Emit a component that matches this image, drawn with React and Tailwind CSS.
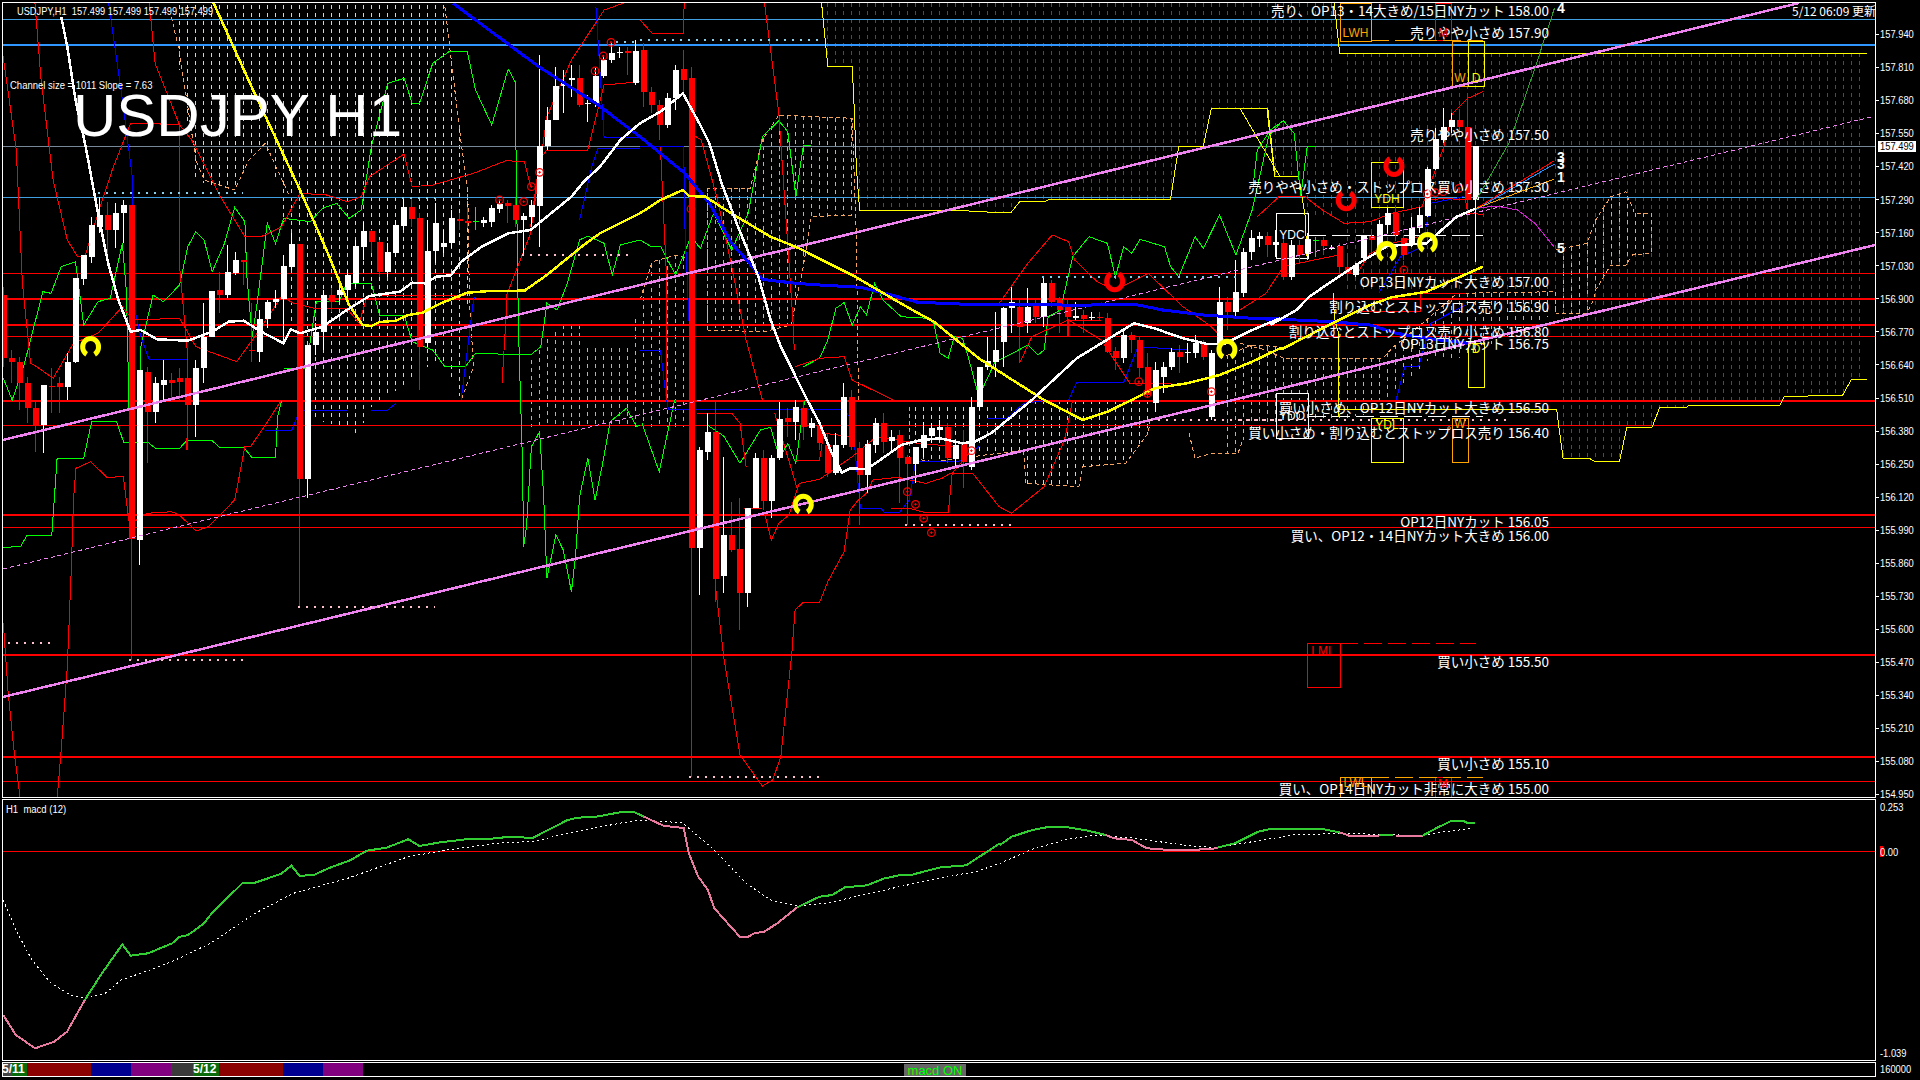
import React from "react";

// read off the reference in zoomed coordinates, converted to page pixels here
const seg = (xo, s, yo) => (...a) => {
  const out = [];
  for (let i = 0; i < a.length; i += 2) out.push([xo + a[i] / s, yo + a[i + 1] / 3]);
  return out;
};
const A = seg(0, 2.45, 0);
const B = seg(640, 2.45, 0);
const C = seg(1240, 2.306, 0);
const D = seg(640, 2.45, 400);
const E = seg(0, 2.45, 400);
const F = seg(1240, 2.306, 400);
const M1 = seg(0, 1.568, 780);
const M2 = seg(1000, 1.704, 780);
const str = (p) => p.map((q) => `${q[0].toFixed(1)},${q[1].toFixed(1)}`).join(" ");

// type, body top, body bottom, wick top, wick bottom (y x 3); one per bar, 8px apart
const BARS = `r 885 1075 860 1100|r 1075 1085 1050 1150|r 1085 1150 1070 1230|r 1150 1225 1130 1270|r 1225 1275 1200 1355|w 1155 1275 1155 1358|r 1157 1160 1105 1240|r 1150 1160 1130 1240|w 1085 1160 1060 1200|w 835 1085 835 1090|w 765 838 765 855|w 675 770 650 790|w 645 680 590 700|r 645 690 605 790|w 640 690 610 745|w 615 640 600 730|r 615 1618 615 1980|w 1110 1620 1110 1695|r 1115 1235 1100 1390|w 1150 1235 1130 1270|w 1140 1155 1080 1200|r 1140 1150 1120 1200|r 1135 1145 1105 1200|r 1135 1215 1100 1350|w 1105 1215 1080 1310|w 1010 1105 910 1150|w 873 1010 873 1010|r 870 885 815 940|w 815 885 735 895|w 780 820 755 825|r 780 785 780 855|r 1050 1054 910 1085|w 958 1055 930 1085|w 905 958 900 985|w 897 905 870 925|w 798 897 765 1030|w 733 800 700 810|r 733 1436 733 1820|w 1035 1436 1035 1493|w 995 1035 970 1065|w 885 995 870 1050|r 885 905 865 935|w 870 885 855 905|w 825 870 810 900|w 738 850 720 860|w 693 740 665 780|r 693 725 690 760|r 725 815 720 830|w 755 815 730 830|w 675 760 660 770|w 620 678 595 690|r 620 657 595 680|r 655 1040 640 1170|w 752 1030 660 1040|w 670 752 610 790|w 728 740 690 760|w 654 728 630 745|r 658 664 640 690|r 664 668 620 685|g 664 667 620 690|w 660 668 650 680|w 623 665 615 680|w 612 628 600 640|r 610 618 600 670|r 615 660 595 680|w 648 660 640 765|w 615 650 600 680|w 438 618 165 740|w 360 438 320 450|w 258 360 200 360|w 250 258 210 340|w 235 240 195 290|r 235 315 195 320|w 310 312 285 365|w 228 310 205 320|w 180 228 165 235|w 160 180 130 190|w 157 160 140 175|r 153 158 140 225|w 153 250 120 255|r 150 275 130 320|r 275 315 260 340|r 315 375 300 420|w 295 375 280 385|w 210 295 195 330|r 208 240 150 280|r 235 1643 200 2330|w 1350 1643 1340 1785|w 1295 1355 1240 1380|r 1295 1737 1200 1805|w 1605 1728 1370 1778|r 1605 1650 1505 1655|r 1647 1778 1495 1890|w 1525 1780 1525 1820|w 1375 1525 1360 1525|r 1375 1503 1350 1530|w 1375 1503 1365 1555|w 1257 1375 1205 1380|r 1255 1265 1225 1310|w 1220 1265 1200 1320|r 1225 1280 1200 1320|w 1268 1283 1255 1310|r 1275 1330 1260 1350|r 1335 1420 1300 1430|w 1335 1418 1300 1425|w 1190 1335 1150 1345|r 1190 1340 1170 1350|r 1343 1425 1325 1575|w 1333 1425 1320 1480|w 1270 1335 1255 1360|r 1270 1325 1240 1360|w 1310 1322 1290 1355|r 1305 1375 1290 1510|r 1370 1392 1365 1575|w 1340 1392 1340 1450|w 1305 1345 1265 1370|w 1285 1308 1270 1330|w 1280 1290 1260 1320|r 1280 1375 1270 1390|w 1335 1378 1320 1400|r 1330 1385 1290 1465|w 1220 1400 1190 1410|w 1100 1220 1100 1230|w 1083 1100 1010 1110|w 1050 1085 935 1130|w 925 1025 920 1100|w 905 925 860 1000|r 920 980 900 1090|w 920 970 865 1000|r 915 950 900 970|w 850 950 830 980|r 850 905 840 920|r 900 930 890 1000|r 915 950 900 1010|w 948 955 905 960|r 945 958 930 1000|w 950 953 935 960|r 950 953 935 960|r 955 1055 940 1060|r 1052 1075 1040 1110|w 1005 1075 990 1090|r 1005 1020 995 1060|r 1020 1105 1010 1130|r 1100 1185 1060 1195|w 1110 1210 1085 1235|w 1100 1130 1085 1180|w 1055 1100 1045 1110|r 1055 1070 1035 1120|w 1055 1060 1030 1090|w 1030 1060 1005 1075|r 1030 1070 1020 1080|w 1060 1250 1050 1260|w 905 1035 860 1060|r 905 935 890 990|w 875 935 780 950|w 755 880 745 890|w 715 755 690 780|w 708 718 695 740|r 708 735 695 770|w 725 735 690 770|r 730 830 715 840|w 735 830 720 840|r 735 765 720 790|w 718 762 700 770|g 720 722 710 770|r 720 738 710 765|w 743 747 735 750|r 738 800 730 830|r 800 822 760 830|w 795 825 790 830|w 708 775 705 780|r 708 720 690 760|w 672 745 660 760|w 640 675 625 700|r 640 705 620 720|r 715 765 705 780|w 685 730 650 740|w 645 685 620 700|w 508 648 500 650|w 418 508 385 510|w 380 420 325 430|w 360 382 340 400|r 360 382 340 400|r 382 600 285 660|w 438 600 438 785`
  .split("|")
  .map((s, i) => {
    const [t, a, b, c, d] = s.split(" ");
    return { x: 1 + 8 * i, t, top: a / 3, bot: b / 3, wt: c / 3, wb: d / 3 };
  });

const at = (p, x) => {
  if (x <= p[0][0]) return p[0][1];
  for (let i = 1; i < p.length; i++) {
    if (x <= p[i][0]) {
      const [x0, y0] = p[i - 1];
      const [x1, y1] = p[i];
      return y0 + ((y1 - y0) * (x - x0)) / (x1 - x0 || 1);
    }
  }
  return p[p.length - 1][1];
};

// ichimoku hatch: one dashed column per bar between the two spans
const hatch = (up, low, color) => {
  const out = [];
  const x0 = Math.max(up[0][0], low[0][0]);
  const x1 = Math.min(up[up.length - 1][0], low[low.length - 1][0]);
  for (let i = 0; i < 240; i++) {
    const x = 3.5 + 8 * i;
    if (x >= x0 && x <= x1) out.push({ x, y1: at(up, x), y2: at(low, x), color });
  }
  return out;
};

const redBottom = [
  ...B(445, 10, 460, 198, 520, 198, 525, 330, 530, 500, 538, 630, 760, 630, 850, 636, 910, 636, 930, 605, 990, 605, 1005, 597, 1300, 597, 1320, 438, 1380, 438, 1400, 325, 1538, 325, 1556, 530, 1568, 530),
  ...C(0, 325, 62, 325, 80, 530, 135, 530, 150, 645, 229, 645),
];
const redRight = [
  ...C(230, 880, 728, 880, 729, 1228, 745, 1375, 805, 1375, 820, 1385, 875, 1385, 892, 1282, 950, 1282, 968, 1222, 1030, 1222, 1035, 1215, 1245, 1215, 1255, 1190, 1390, 1185, 1410, 1138, 1445, 1138),
];
const HATCH = [
  ...hatch(A(430, 15, 1090, 15, 1130, 430, 1146, 570), A(430, 130, 480, 545, 575, 570, 610, 480, 650, 430, 690, 600, 720, 1050, 750, 1250, 860, 1290, 880, 1310, 900, 1230, 950, 1190, 1050, 1100, 1090, 1090, 1130, 1200, 1146, 900), "#e0d0d0"),
  ...hatch(A(1290, 1100, 1340, 1020, 1380, 975, 1420, 975, 1440, 1045, 1540, 1045, 1568, 900).concat(B(30, 785, 90, 765, 115, 775)), A(1290, 1280, 1568, 1280).concat(B(115, 1280)), "#f4a460"),
  ...hatch(B(165, 565, 270, 565, 300, 420, 340, 345, 430, 350, 520, 355), B(165, 990, 305, 995, 370, 975, 400, 800, 420, 650, 520, 645), "#f4a460"),
  ...hatch(B(445, 10, 1568, 10).concat(C(229, 10)), redBottom, "#ff0000"),
  ...hatch(C(230, 160, 1445, 160), redRight, "#ff0000"),
  ...hatch(D(940, 0, 1250, 0), D(940, 250, 1075, 260, 1085, 200, 1190, 190, 1245, 100, 1250, 60), "#e0d0d0"),
  ...hatch(D(660, 20, 940, 20), D(660, 175, 720, 185, 940, 150), "#e0d0d0"),
  ...hatch(B(1420, 1075, 1500, 1035, 1568, 1040).concat(C(100, 1075, 330, 1075, 350, 1045, 430, 960, 500, 880, 728, 875)), D(1345, 100, 1360, 175, 1400, 160, 1465, 160, 1480, 110, 1568, 60).concat(C(0, 1330, 20, 1260, 220, 1260, 300, 1240, 440, 1075, 510, 1075, 728, 940)), "#f4a460"),
  ...hatch(C(728, 750, 800, 730, 820, 660, 855, 590, 890, 575, 910, 640, 948, 640), C(728, 940, 800, 940, 815, 900, 820, 870, 855, 795, 890, 795, 905, 765, 948, 760), "#f4a460"),
];

const KUMO_EDGE = [
  A(420, 50, 440, 160, 480, 480, 500, 540, 575, 570, 610, 480, 650, 430, 710, 590),
  A(1090, 20, 1130, 430, 1146, 570, 1150, 900, 1160, 1100, 1130, 1200),
  B(0, 900, 30, 785, 90, 765, 115, 775),
  B(165, 990, 165, 565, 270, 565, 300, 420, 340, 345, 430, 350, 520, 355, 530, 700, 535, 1200),
  B(165, 990, 305, 995, 370, 975, 400, 800, 420, 650, 520, 645),
  D(660, 20, 660, 175, 720, 185, 940, 150, 945, 250, 1075, 260, 1085, 200, 1190, 190, 1245, 100, 1250, 60),
  D(1345, 100, 1360, 175, 1400, 160, 1465, 160, 1480, 110),
  B(1420, 1075, 1500, 1035, 1568, 1040),
  C(0, 1030, 60, 1050, 100, 1075, 330, 1075, 350, 1045, 430, 960, 500, 880, 728, 875, 728, 940),
  C(728, 750, 800, 730, 820, 660, 855, 590, 890, 575, 910, 640, 948, 640, 948, 760, 905, 765, 890, 795, 855, 795, 820, 870, 815, 900, 800, 940, 728, 940),
];

const WHITE_MA = [
  ...A(150, 50, 165, 140, 185, 300, 210, 440, 240, 640, 265, 790, 290, 900, 320, 995, 345, 990, 385, 1018, 460, 1022, 520, 995, 560, 965, 597, 962, 640, 995, 695, 1030, 712, 988, 735, 1000, 790, 980, 850, 930, 905, 888, 980, 875, 1010, 848, 1040, 850, 1070, 830, 1105, 826, 1130, 785, 1180, 740, 1245, 700, 1300, 690, 1350, 640, 1400, 590, 1430, 545, 1470, 500, 1520, 420, 1568, 370),
  ...B(50, 335, 105, 280, 150, 380, 170, 430, 200, 550, 240, 680, 290, 830, 320, 960, 345, 1040, 410, 1200),
  ...D(440, 70, 470, 160, 495, 218, 515, 205, 555, 208, 600, 170, 640, 135, 690, 120, 735, 115, 790, 130, 820, 125, 860, 100, 920, 40, 960, 0),
  ...B(1070, 1075, 1150, 1015, 1210, 970, 1260, 985, 1330, 1015, 1390, 1032, 1430, 1032, 1500, 990, 1568, 955),
  ...C(70, 975, 130, 930, 160, 890, 210, 845, 280, 785, 340, 738, 430, 730, 500, 650, 545, 625),
];
const YELLOW_MA = [
  ...A(520, 0, 620, 270, 735, 570, 800, 750, 855, 915, 888, 975, 910, 978, 930, 966, 970, 962, 1000, 945, 1035, 938, 1080, 910, 1145, 878, 1200, 873, 1285, 872, 1340, 825, 1430, 735, 1470, 700, 1568, 640),
  ...B(50, 600, 105, 570, 120, 588, 160, 590, 230, 645, 320, 710, 390, 745, 430, 770, 520, 825, 590, 875, 660, 925, 720, 965, 770, 1015, 830, 1075, 900, 1130, 990, 1200),
  ...D(1085, 60, 1145, 35, 1205, 0),
  ...B(1260, 1165, 1340, 1150, 1420, 1125, 1500, 1085, 1568, 1045),
  ...C(100, 1045, 220, 965, 300, 915, 350, 892, 430, 875, 500, 835, 560, 800),
];
const BLUE_MA = [
  ...A(1110, 10, 1320, 200, 1460, 310, 1568, 410),
  ...B(110, 520, 170, 610, 225, 730, 265, 785, 300, 838, 380, 850, 440, 855, 540, 862, 600, 880, 680, 907, 800, 913, 1000, 913, 1080, 918, 1130, 912, 1220, 915, 1280, 930, 1380, 945, 1500, 955, 1568, 957),
  ...C(60, 958, 130, 960, 210, 965, 300, 975, 360, 1000, 430, 1015, 525, 1030),
];

const BLUE_THIN = [
  A(265, 0, 300, 300, 325, 540, 325, 900, 345, 1010, 365, 1078, 460, 1078),
  A(1460, 20, 1480, 412, 1565, 412),
  A(1420, 660, 1450, 500, 1465, 445, 1568, 445),
  B(0, 440, 107, 440, 110, 680, 125, 1100, 125, 1200),
  B(0, 1050, 50, 1050, 65, 1200),
  A(1130, 1200, 1160, 900, 1165, 890),
  E(650, 90, 715, 90, 735, 30, 850, 30),
  E(910, 30, 950, 30, 970, 10),
  D(65, 0, 70, 28, 500, 30, 520, 60, 540, 325, 590, 325, 600, 338, 635, 338, 660, 300, 675, 185, 780, 185, 830, 140),
  D(850, 55, 900, 55, 940, 10, 1000, 0),
  B(1050, 1200, 1070, 1147, 1185, 1147, 1220, 1040, 1340, 1050),
  C(360, 1200, 380, 1100, 412, 1100, 440, 970, 520, 915),
  C(320, 880, 370, 770, 420, 740, 440, 610, 515, 590),
];

const RED_THIN = [
  A(85, 0, 100, 230, 130, 540, 165, 720, 190, 770, 208, 770, 240, 640, 275, 510, 320, 370, 360, 370, 440, 375, 470, 420, 540, 590, 600, 710, 640, 710, 690, 680, 735, 580, 800, 585, 850, 605, 885, 590, 905, 530, 990, 462, 1010, 560, 1060, 555, 1160, 520, 1240, 482, 1285, 485, 1300, 560),
  A(1300, 680, 1322, 480, 1340, 450, 1440, 450, 1480, 255, 1568, 245),
  A(7, 165, 40, 450, 55, 850, 75, 1090, 90, 1100, 130, 1135, 180, 1030, 240, 1000, 300, 920, 325, 960, 440, 955, 480, 1040, 580, 1085, 630, 1000, 690, 890, 720, 910, 770, 925, 850, 925, 880, 970, 900, 885, 1140, 885),
  E(8, 670, 20, 880, 35, 1060, 50, 1200),
  E(140, 1195, 150, 1050, 165, 800, 175, 500, 180, 300, 186, 205, 222, 185, 262, 232, 302, 230, 322, 420),
  E(322, 370, 360, 340, 420, 335, 440, 345, 480, 393, 510, 380, 575, 300, 600, 140, 615, 138, 650, 75, 690, 0),
  A(365, 0, 380, 190, 440, 375, 440, 800, 460, 1070, 458, 1350),
  A(1550, 0, 1480, 30, 1400, 180, 1340, 350, 1320, 520, 1300, 700, 1240, 890, 1240, 950, 1230, 1150),
  B(0, 60, 30, 100, 107, 100, 108, 10),
  B(305, 10, 340, 340, 375, 970, 378, 1050),
  B(50, 440, 65, 830, 65, 1200),
  B(125, 400, 150, 420, 190, 600, 225, 800, 260, 1020, 300, 1200),
  B(380, 1100, 440, 1075, 500, 1070, 520, 1140, 620, 1200),
  D(185, 560, 205, 770, 245, 1065, 300, 1158, 325, 1140, 345, 1070, 372, 760, 380, 630, 400, 607, 440, 607, 460, 545, 500, 455, 515, 330, 535, 300, 555, 280, 570, 240, 630, 232, 700, 250, 740, 235, 760, 220, 815, 220, 880, 320, 910, 340, 990, 260, 1040, 120, 1060, 0),
  D(305, 340, 322, 420, 340, 370, 365, 345, 390, 250, 440, 238, 520, 170, 580, 110, 680, 130, 780, 140),
  D(330, 40, 385, 265),
  D(615, 325, 660, 325, 700, 338, 755, 338, 765, 220, 820, 140),
  D(255, 325, 300, 325),
  D(140, 40, 225, 40, 245, 70, 260, 200),
  D(380, 180, 440, 180, 450, 100, 520, 110),
  B(880, 910, 950, 790, 1010, 705, 1050, 725, 1065, 780, 1120, 845, 1165, 870, 1245, 820, 1330, 920, 1400, 980, 1440, 1030),
  B(930, 1090, 960, 1010, 1050, 960, 1130, 1020, 1200, 1150, 1300, 1150),
  B(1050, 1010, 1050, 960, 1130, 960),
  C(40, 650, 90, 590, 150, 590, 190, 630, 240, 670, 300, 665, 350, 640, 420, 620, 470, 440, 490, 340, 525, 295, 560, 275),
  C(0, 930, 60, 880, 100, 800, 170, 780, 230, 765, 230, 820, 270, 820, 300, 760, 350, 730, 410, 710),
  C(280, 935, 415, 935, 415, 880, 520, 880),
  C(440, 600, 470, 595, 520, 600, 525, 640, 560, 643),
];

const GREEN_THIN = [
  A(8, 1135, 30, 1200, 60, 1090, 105, 875, 125, 880, 150, 800, 185, 785, 205, 975, 240, 905, 270, 895, 300, 730, 310, 880, 320, 1440),
  A(342, 1200, 345, 1040, 375, 885, 400, 905, 440, 855, 460, 740, 480, 695, 500, 720, 520, 815, 550, 730, 575, 622, 600, 665, 605, 830, 618, 1010, 630, 910, 655, 670, 675, 730, 695, 655, 760, 665, 790, 625, 825, 610, 855, 655, 885, 630, 910, 440, 950, 250, 990, 235, 1010, 310, 1028, 310, 1060, 190, 1100, 155, 1145, 155, 1165, 270, 1205, 375, 1245, 207, 1262, 245, 1270, 980, 1280, 1380, 1283, 1640, 1290, 1580, 1302, 1340, 1322, 1295, 1332, 1490, 1340, 1735, 1362, 1605, 1380, 1650, 1400, 1775, 1410, 1670, 1420, 1490, 1440, 1375, 1458, 1500, 1475, 1400, 1495, 1265, 1535, 1225, 1560, 1280, 1568, 1275),
  E(7, 442, 50, 440, 67, 405, 127, 405, 140, 175, 205, 175, 225, 63, 285, 63, 303, 127, 362, 127, 381, 145, 440, 145, 459, 120, 518, 120, 538, 142, 597, 142, 617, 172, 675, 172, 680, 50, 690, 0),
  A(695, 1105, 750, 1105, 775, 905, 830, 905, 850, 850, 910, 850, 930, 945, 990, 945, 1010, 1025, 1060, 1050, 1090, 1100, 1140, 1100, 1165, 1060, 1300, 1065, 1325, 1040, 1340, 910, 1365, 930, 1390, 850, 1420, 720, 1440, 708, 1480, 730, 1500, 825, 1520, 735, 1568, 720),
  B(0, 720, 25, 738, 50, 738, 87, 825, 125, 710, 148, 745, 180, 640, 225, 750, 265, 640, 300, 410, 340, 362, 362, 395, 382, 590, 400, 437, 420, 437),
  B(400, 1100, 440, 1075, 460, 1020, 480, 925, 500, 908, 520, 975, 540, 920, 555, 945, 575, 850, 595, 900, 640, 950, 705, 955, 720, 970, 735, 1060, 755, 1075, 770, 1010, 790, 1015, 805, 1075, 830, 1190, 870, 1085, 905, 1065, 950, 1035, 975, 1065, 990, 1050, 1000, 950, 1030, 930, 1060, 770, 1100, 710, 1145, 730, 1165, 830, 1185, 740, 1205, 760, 1225, 718, 1285, 740, 1300, 800, 1320, 830, 1360, 710, 1380, 745, 1420, 645, 1460, 765, 1500, 630, 1540, 410, 1568, 370),
  C(30, 560, 40, 450, 70, 390, 100, 362, 125, 400, 140, 590, 155, 440, 175, 438),
  D(5, 70, 47, 215, 85, 0),
  D(165, 75, 205, 108, 245, 190, 295, 90, 320, 82, 342, 175, 362, 130, 382, 190, 400, 25, 405, 0),
];

const YELLOW_STEP = [
  redBottom.slice(0, 23),
  C(0, 325, 62, 325, 80, 530, 135, 530, 150, 645, 155, 780),
  C(217, 5, 230, 160, 1445, 160),
  C(215, 880, 218, 960, 228, 1000, 228, 1250),
  F(229, 28, 730, 28, 745, 175, 805, 175, 820, 185, 875, 185, 892, 82, 950, 82, 968, 22, 1030, 22, 1035, 15, 1245, 15, 1255, -10, 1390, -15, 1410, -62, 1445, -62),
];

const HLINES = [
  [19, 1, "#3f9fe0"], [44, 2, "#2f97ff"], [146, 1, "#778899"], [197, 1, "#3f9fe0"],
  [273, 1, "#ff0000"], [298, 2, "#ff0000"], [324, 2, "#ff0000"], [336, 1, "#ff0000"],
  [400, 2, "#ff0000"], [425, 1, "#ff0000"], [514, 2, "#ff0000"], [527, 1, "#ff0000"],
  [654, 2, "#ff0000"], [756, 2, "#ff0000"], [781, 1, "#ff0000"],
];

// square dotted levels
const DOTS = [
  [A(240, 578, 595, 578), "#87ceeb"], [A(985, 595, 1065, 595), "#87ceeb"], [A(1510, 125, 1568, 125), "#87ceeb"],
  [B(0, 120, 440, 120), "#87ceeb"], [B(985, 830, 1470, 830), "#87ceeb"],
  [A(1280, 765, 1540, 765), "#ffc0cb"], [D(650, 375, 910, 375), "#ffc0cb"], [D(120, 1130, 440, 1130), "#ffc0cb"],
  [E(730, 620, 1065, 620), "#ffc0cb"], [E(317, 780, 595, 780), "#ffc0cb"], [E(20, 728, 125, 728), "#ffc0cb"],
  [F(0, 60, 615, 60), "#ffc0cb"], [D(1250, 60, 1568, 60), "#ffc0cb"],
];

const BOXES = [
  [1340, 3, 31, 38, "#ffa500"], [1435, 3, 16, 37, "#ff0000"], [1452, 41, 16, 45, "#ffa500"], [1468, 41, 16, 45, "#ffff00"],
  [1276, 213, 32, 45, "#ffffff"], [1371, 162, 32, 45, "#ffff00"], [1468, 343, 16, 44, "#ffff00"], [1276, 393, 32, 45, "#ffffff"],
  [1371, 418, 32, 44, "#ffff00"], [1452, 418, 16, 44, "#ffa500"], [1307, 643, 33, 44, "#ff0000"], [1340, 777, 31, 22, "#ffa500"], [1435, 777, 16, 22, "#ff0000"],
];
const LEVEL_DASH = [
  [1371, 1483, 40.5, "#ffa500"], [1308, 1483, 235.5, "#ffffff"], [1308, 1483, 416.5, "#ffffff"],
  [1340, 1476, 643.5, "#ff0000"], [1371, 1483, 777.5, "#ffa500"],
];

const TARGETS = [
  ...[[1224, 600], [1283, 605], [1302, 560], [1322, 517], [1458, 213], [1478, 168], [1497, 127]].map(([x, y]) => A(x, y)[0]),
  ...[[125, 627], [1222, 1145], [1243, 1180], [1400, 1175]].map(([x, y]) => B(x, y)[0]),
  ...[[655, 275], [675, 313], [695, 355], [714, 398], [812, 152]].map(([x, y]) => D(x, y)[0]),
  ...[[432, 582], [450, 578], [468, 575], [505, 565], [378, 810]].map(([x, y]) => C(x, y)[0]),
];
const HOOPS_Y = [A(222, 1042)[0], D(400, 315)[0], B(1438, 1050)[0], C(338, 757)[0], C(432, 730)[0]];
const HOOPS_R = [B(1163, 843)[0], C(245, 600)[0], C(355, 497)[0]];

const MACD_LINES = [
  [M1(5, 705, 25, 765, 55, 805, 85, 785, 105, 755, 133, 660), "#e87aa0"],
  [M1(133, 660, 158, 585, 192, 493, 205, 527, 232, 520, 270, 490, 282, 470, 295, 465, 320, 430, 332, 400, 380, 310, 400, 308, 440, 282, 457, 257, 470, 288, 493, 284, 515, 265, 550, 240, 575, 212, 606, 203, 640, 178, 658, 198, 690, 187, 735, 177, 770, 176, 800, 170, 835, 174, 890, 120, 905, 113, 935, 110, 975, 96, 995, 97, 1010, 110), "#32cd32"],
  [M1(1010, 110, 1040, 137, 1072, 144, 1080, 220, 1095, 290, 1110, 330, 1120, 385, 1160, 470, 1173, 470, 1185, 458, 1197, 457, 1220, 428, 1250, 382), "#e87aa0"],
  [M1(1250, 382, 1285, 350, 1305, 345, 1325, 322, 1360, 316, 1385, 296, 1410, 286, 1430, 284, 1475, 262, 1515, 256, 1568, 190), "#32cd32"],
  [M2(0, 195, 20, 170, 55, 150, 85, 140, 110, 140, 150, 152, 180, 165), "#32cd32"],
  [M2(180, 165, 195, 175, 225, 180, 250, 205, 290, 210, 360, 208, 370, 203), "#e87aa0"],
  [M2(370, 203, 400, 190, 440, 155, 460, 147, 550, 147, 580, 158), "#32cd32"],
  [M2(580, 158, 595, 167, 645, 167), "#e87aa0"],
  [M2(645, 165, 670, 165), "#32cd32"],
  [M2(675, 167, 720, 167), "#e87aa0"],
  [M2(720, 167, 745, 143, 770, 122, 790, 122, 795, 128, 810, 128), "#32cd32"],
];
const MACD_SIGNAL = [
  ...M1(5, 360, 25, 450, 50, 540, 80, 610, 110, 645, 135, 655, 165, 640, 190, 600, 235, 570, 275, 540, 330, 490, 400, 400, 460, 340, 545, 295, 640, 230, 700, 210, 780, 190, 840, 183, 900, 155, 1000, 120, 1070, 128, 1120, 210, 1170, 310, 1210, 362, 1250, 378, 1300, 368, 1410, 320, 1500, 285, 1530, 275, 1568, 250),
  ...M2(55, 208, 110, 180, 150, 168, 180, 167, 230, 175, 320, 197, 370, 203, 430, 185, 500, 165, 580, 160, 720, 167, 745, 158, 805, 145),
];

const NOTES = [
  ["売り、OP13・14大きめ/15日NYカット 158.00", "top-[0px]"],
  ["売りやや小さめ 157.90", "top-[22px]"],
  ["売りやや小さめ 157.50", "top-[124px]"],
  ["売りやや小さめ・ストップロス買い小さめ 157.30", "top-[176px]"],
  ["OP13日NYカット大きめ 157.00", "top-[271px]"],
  ["割り込むとストップロス売り 156.90", "top-[296px]"],
  ["割り込むとストップロス売り小さめ 156.80", "top-[321px]"],
  ["OP13日NYカット 156.75", "top-[333px]"],
  ["買い小さめ、OP12日NYカット大きめ 156.50", "top-[397px]"],
  ["買い小さめ・割り込むとストップロス売り 156.40", "top-[422px]"],
  ["OP12日NYカット 156.05", "top-[511px]"],
  ["買い、OP12・14日NYカット大きめ 156.00", "top-[525px]"],
  ["買い小さめ 155.50", "top-[651px]"],
  ["買い小さめ 155.10", "top-[753px]"],
  ["買い、OP14日NYカット非常に大きめ 155.00", "top-[778px]"],
];
const TAGS = [
  ["LWH", "left-[1337px] top-[23px] w-[31px] text-[#ffa500] text-[12px]"],
  ["M", "left-[1432px] top-[23px] w-[16px] text-[#ff0000] text-[12px]"],
  ["W", "left-[1449px] top-[68px] w-[16px] text-[#ffa500] text-[12px]"],
  ["D", "left-[1465px] top-[68px] w-[16px] text-[#ffff00] text-[12px]"],
  ["YDC", "left-[1273px] top-[225px] w-[32px] text-white text-[12px]"],
  ["YDH", "left-[1368px] top-[189px] w-[32px] text-[#ffff00] text-[12px]"],
  ["D", "left-[1465px] top-[339px] w-[16px] text-[#ffff00] text-[12px]"],
  ["YDO", "left-[1273px] top-[406px] w-[32px] text-white text-[12px]"],
  ["YDL", "left-[1368px] top-[415px] w-[32px] text-[#ffff00] text-[12px]"],
  ["W", "left-[1449px] top-[414px] w-[16px] text-[#ffa500] text-[12px]"],
  ["LML", "left-[1304px] top-[641px] w-[32px] text-[#ff0000] text-[12px]"],
  ["LWL", "left-[1337px] top-[773px] w-[31px] text-[#ffa500] text-[12px]"],
  ["M", "left-[1432px] top-[774px] w-[16px] text-[#ff0000] text-[12px]"],
  ["4", "left-[1554px] top-[-2px] w-[8px] text-white text-[14px] font-bold"],
  ["3", "left-[1554px] top-[147px] w-[8px] text-white text-[14px] font-bold"],
  ["3", "left-[1554px] top-[154px] w-[8px] text-white text-[14px] font-bold"],
  ["1", "left-[1554px] top-[167px] w-[8px] text-white text-[14px] font-bold"],
  ["5", "left-[1554px] top-[238px] w-[8px] text-white text-[14px] font-bold"],
];
const TICKS = ["157.940", "157.810", "157.680", "157.550", "157.420", "157.290", "157.160", "157.030", "156.900", "156.770", "156.640", "156.510", "156.380", "156.250", "156.120", "155.990", "155.860", "155.730", "155.600", "155.470", "155.340", "155.210", "155.080", "154.950"];
const STRIP = [
  ["bg-[#444444]", "w-[9px]"], ["bg-[#0a6b0a]", "w-[15px]"], ["bg-[#8b0000]", "w-[64px]"], ["bg-[#000090]", "w-[40px]"], ["bg-[#800080]", "w-[40px]"],
  ["bg-[#3a3a3a]", "w-[22px]"], ["bg-[#0a6b0a]", "w-[26px]"], ["bg-[#8b0000]", "w-[64px]"], ["bg-[#000090]", "w-[40px]"], ["bg-[#800080]", "w-[40px]"],
];

const Line = ({ p, c, w = 1, dash }) => (
  <polyline points={str(p)} fill="none" stroke={c} strokeWidth={w} strokeDasharray={dash} />
);

function PriceChart() {
  return (
    <svg width="1872" height="794" viewBox="3 3 1872 794" shapeRendering="crispEdges" className="block">
      {HATCH.map((h, i) => (
        <line key={i} x1={h.x} x2={h.x} y1={h.y1} y2={h.y2} stroke={h.color} strokeDasharray="4 4" />
      ))}
      {KUMO_EDGE.map((p, i) => <Line key={i} p={p} c="#f4a460" dash="4 3" />)}
      {HLINES.map(([y, w, c]) => <rect key={y} x="3" y={y} width="1872" height={w} fill={c} />)}
      {BOXES.map(([x, y, w, h, c], i) => (
        <rect key={i} x={x + 0.5} y={y + 0.5} width={w} height={h} fill="none" stroke={c} />
      ))}
      {LEVEL_DASH.map(([x1, x2, y, c], i) => (
        <line key={i} x1={x1} x2={x2} y1={y} y2={y} stroke={c} strokeDasharray="18 6" />
      ))}
      {YELLOW_STEP.map((p, i) => <Line key={i} p={p} c="#ffff00" />)}
      {GREEN_THIN.map((p, i) => <Line key={i} p={p} c="#00ff00" />)}
      {BLUE_THIN.map((p, i) => <Line key={i} p={p} c="#0000ff" />)}
      {RED_THIN.map((p, i) => <Line key={i} p={p} c="#ff0000" />)}
      {BARS.map((b, i) => {
        const c = b.t === "r" ? "#ff0000" : b.t === "g" ? "#00ff00" : "#ffffff";
        return (
          <g key={i} fill={c}>
            <rect x={b.x + 2} y={b.wt} width="1" height={b.wb - b.wt} />
            <rect x={b.x} y={b.top} width="6" height={Math.max(b.bot - b.top, 1)} />
          </g>
        );
      })}
      <Line p={[[3, 569], [1871, 117]]} c="#ee82ee" dash="4 3" />
      <Line p={[[3, 440], [1799, 3]]} c="#ee82ee" w={2.5} />
      <Line p={[[3, 697], [1875, 245]]} c="#ee82ee" w={2.5} />
      <Line p={BLUE_MA} c="#0000ff" w={3} />
      <Line p={YELLOW_MA} c="#ffff00" w={2.5} />
      <Line p={WHITE_MA} c="#ffffff" w={2.5} />
      <Line p={C(545, 600, 620, 430, 680, 205, 725, 25)} c="#2e9e2e" />
      <Line p={C(545, 625, 590, 618, 640, 630, 680, 670, 725, 742)} c="#d020d0" />
      <Line p={C(545, 625, 725, 482)} c="#ff0000" />
      <Line p={C(545, 628, 725, 492)} c="#1e90ff" />
      <Line p={C(545, 625, 725, 537)} c="#ffa500" />
      <line x1="1475.5" x2="1475.5" y1="208" y2="262" stroke="#ffffff" strokeDasharray="5 3" />
      {DOTS.map(([p, c], i) => (
        <line key={i} x1={p[0][0]} x2={p[1][0]} y1={p[0][1]} y2={p[1][1]} stroke={c} strokeWidth="2" strokeDasharray="2 6" />
      ))}
      <g shapeRendering="auto" fill="none">
        {TARGETS.map(([x, y], i) => (
          <g key={i} stroke="#ff0000">
            <circle cx={x} cy={y} r="3.8" strokeWidth="1.2" />
            <circle cx={x} cy={y} r="0.8" fill="#ff0000" />
          </g>
        ))}
        {HOOPS_Y.map(([x, y], i) => (
          <path key={i} d={`M${x - 4} ${y + 7}A8 8.5 0 1 1 ${x + 4} ${y + 7}`} stroke="#ffff00" strokeWidth="5" />
        ))}
        {HOOPS_R.map(([x, y], i) => (
          <path key={i} d={`M${x - 4} ${y - 7}A8 8.5 0 1 0 ${x + 4} ${y - 7}`} stroke="#ff0000" strokeWidth="5" />
        ))}
      </g>
    </svg>
  );
}

function MacdChart() {
  return (
    <svg width="1872" height="260" viewBox="3 800 1872 260" shapeRendering="crispEdges" className="block">
      <rect x="3" y="851" width="1872" height="1" fill="#ff0000" />
      <Line p={MACD_SIGNAL} c="#ffffff" dash="2 3" />
      {MACD_LINES.map(([p, c], i) => <Line key={i} p={p} c={c} w={2} />)}
    </svg>
  );
}

export default function App() {
  return (
    <div className="w-[1920px] h-[1080px] bg-black overflow-hidden flex flex-col gap-px pt-[2px] pl-[2px] font-['Liberation_Sans',sans-serif] text-white">
      {/* price window */}
      <div className="flex h-[796px]">
        <div className="relative w-[1874px] h-[796px] border border-white overflow-hidden">
          <PriceChart />
          <div className="absolute left-[14px] top-[1px] text-[10.5px] leading-[14px] whitespace-pre scale-x-[0.88] origin-left">USDJPY,H1  157.499 157.499 157.499 157.499</div>
          <div className="absolute left-[7px] top-[76px] text-[10px] leading-[14px] whitespace-pre scale-x-[0.95] origin-left">Channel size = 1011 Slope = 7.63</div>
          <div className="absolute left-[70px] top-[83px] text-[60px] leading-none whitespace-pre">USDJPY H1</div>
          <div className="absolute left-[1789px] top-[0px] text-[12px] leading-[16px] whitespace-pre font-['Noto_Sans_CJK_JP',sans-serif]">5/12 06:09 更新</div>
          {NOTES.map(([t, pos]) => (
            <div key={t} className={`absolute right-[326px] ${pos} text-[13.5px] leading-[14px] whitespace-pre font-['Noto_Sans_CJK_JP',sans-serif]`}>{t}</div>
          ))}
          {TAGS.map(([t, cls], i) => (
            <div key={i} className={`absolute ${cls} text-center leading-[14px]`}>{t}</div>
          ))}
        </div>
        <div className="relative w-[44px] pt-[16px] text-[11px]">
          {TICKS.map((t) => (
            <div key={t} className="h-[33.06px] flex items-center gap-[1px]">
              <span className="w-[3px] h-px bg-white" />
              <span className="scale-x-[0.85] origin-left">{t}</span>
            </div>
          ))}
          <div className="absolute left-[2px] top-[139px] w-[38px] h-[11px] bg-white text-black flex items-center justify-center">
            <span className="scale-x-[0.85]">157.499</span>
          </div>
        </div>
      </div>

      {/* macd window */}
      <div className="flex h-[262px]">
        <div className="relative w-[1874px] h-[262px] border border-white overflow-hidden">
          <MacdChart />
          <div className="absolute left-[3px] top-[3px] text-[10px] leading-[14px] whitespace-pre scale-x-[0.95] origin-left">H1  macd (12)</div>
        </div>
        <div className="w-[44px] pl-[4px] text-[11px] leading-[14px]">
          <div className="mt-[1px] scale-x-[0.85] origin-left">0.253</div>
          <div className="mt-[31px] flex items-center">
            <span className="scale-x-[0.85] origin-left relative"><span className="absolute left-0 top-[1px] w-[4px] h-[11px] bg-[#ff0000]" /><span className="relative">0.00</span></span>
          </div>
          <div className="mt-[187px] scale-x-[0.85] origin-left">-1.039</div>
        </div>
      </div>

      {/* volume strip and date bar */}
      <div className="flex h-[15px]">
        <div className="relative w-[1874px] h-[15px] border border-white overflow-hidden flex items-stretch">
          {STRIP.map(([bg, w], i) => <div key={i} className={`${bg} ${w}`} />)}
          <div className="absolute left-[-1px] top-0 text-[12px] leading-[13px] font-bold">5/11</div>
          <div className="absolute left-[190px] top-0 text-[12px] leading-[13px] font-bold">5/12</div>
          <div className="absolute left-[901px] top-[1px] w-[62px] h-[12px] bg-[#666666] overflow-hidden text-center text-[#00ff00] text-[13px] leading-[14px]">macd ON</div>
        </div>
        <div className="w-[44px] pl-[4px] text-[11px] leading-[15px]"><span className="inline-block scale-x-[0.85] origin-left">160000</span></div>
      </div>
    </div>
  );
}
